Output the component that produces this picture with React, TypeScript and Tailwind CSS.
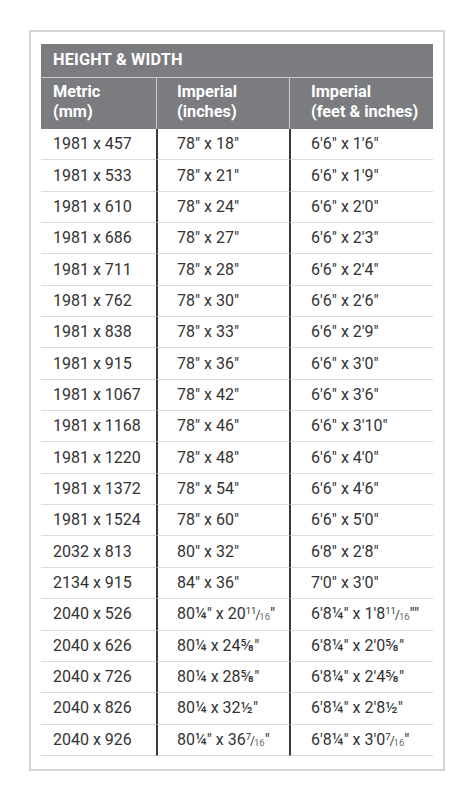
import type { ReactNode } from 'react';

function Frac({ top, bottom }: { top: string; bottom: string }) {
  return (
    <span className="text-[9.5px]">
      <span className="relative -top-[5px]">{top}</span>
      <span className="text-[12px] -mx-[1px]">/</span>
      <span className="relative top-[1px] text-[#6a6a6a]">{bottom}</span>
    </span>
  );
}

const rows: [string, ReactNode, ReactNode][] = [
  ['1981 x 457', '78″ x 18″', '6′6″ x 1′6″'],
  ['1981 x 533', '78″ x 21″', '6′6″ x 1′9″'],
  ['1981 x 610', '78″ x 24″', '6′6″ x 2′0″'],
  ['1981 x 686', '78″ x 27″', '6′6″ x 2′3″'],
  ['1981 x 711', '78″ x 28″', '6′6″ x 2′4″'],
  ['1981 x 762', '78″ x 30″', '6′6″ x 2′6″'],
  ['1981 x 838', '78″ x 33″', '6′6″ x 2′9″'],
  ['1981 x 915', '78″ x 36″', '6′6″ x 3′0″'],
  ['1981 x 1067', '78″ x 42″', '6′6″ x 3′6″'],
  ['1981 x 1168', '78″ x 46″', '6′6″ x 3′10″'],
  ['1981 x 1220', '78″ x 48″', '6′6″ x 4′0″'],
  ['1981 x 1372', '78″ x 54″', '6′6″ x 4′6″'],
  ['1981 x 1524', '78″ x 60″', '6′6″ x 5′0″'],
  ['2032 x 813', '80″ x 32″', '6′8″ x 2′8″'],
  ['2134 x 915', '84″ x 36″', '7′0″ x 3′0″'],
  [
    '2040 x 526',
    <>
      80¼″ x 20<Frac top="11" bottom="16" />″
    </>,
    <>
      6′8¼″ x 1′8<Frac top="11" bottom="16" />″″
    </>,
  ],
  ['2040 x 626', '80¼ x 24⅝″', '6′8¼″ x 2′0⅝″'],
  ['2040 x 726', '80¼ x 28⅝″', '6′8¼″ x 2′4⅝″'],
  ['2040 x 826', '80¼ x 32½″', '6′8¼″ x 2′8½″'],
  [
    '2040 x 926',
    <>
      80¼″ x 36<Frac top="7" bottom="16" />″
    </>,
    <>
      6′8¼″ x 3′0<Frac top="7" bottom="16" />″
    </>,
  ],
];

const cols = 'grid grid-cols-[115px_133px_144px]';

export default function App() {
  return (
    <div
      className="w-[474px] h-[799px] bg-white pt-[30px] pl-[29px]"
      style={{ fontFamily: 'Roboto, "Liberation Sans", sans-serif' }}
    >
      <div className="w-[416px] border-2 border-[#d4d4d4] px-[10px] pt-[12px] pb-[13px]">
        <div className="bg-[#7b7c80] text-white">
          <div className="h-[34px] border-b border-[#c9c9cb] pl-[12px] flex items-center text-[16.3px] font-bold tracking-[0.2px]">
            HEIGHT &amp; WIDTH
          </div>
          <div className={`${cols} h-[51px] text-[16.3px] font-bold leading-[20px]`}>
            <div className="pl-[12px] pt-[4px]">
              Metric
              <br />
              (mm)
            </div>
            <div className="border-l border-[#c9c9cb] pl-[20px] pt-[4px]">
              Imperial
              <br />
              (inches)
            </div>
            <div className="border-l border-[#c9c9cb] pl-[21px] pt-[4px]">
              Imperial
              <br />
              (feet &amp; inches)
            </div>
          </div>
        </div>
        <div className="text-[16px] text-[#333]">
          {rows.map(([metric, inches, feet]) => (
            <div key={metric} className={cols}>
              <div className="h-[31.35px] border-b border-[#dcdcdc] pl-[12px] flex items-center">
                {metric}
              </div>
              <div className="h-[31.35px] border-b border-l-2 border-b-[#dcdcdc] border-l-[#3a3a3a] pl-[19px] flex items-center">
                <span>{inches}</span>
              </div>
              <div className="h-[31.35px] border-b border-l-2 border-b-[#dcdcdc] border-l-[#3a3a3a] pl-[20px] flex items-center">
                <span>{feet}</span>
              </div>
            </div>
          ))}
        </div>
      </div>
    </div>
  );
}
